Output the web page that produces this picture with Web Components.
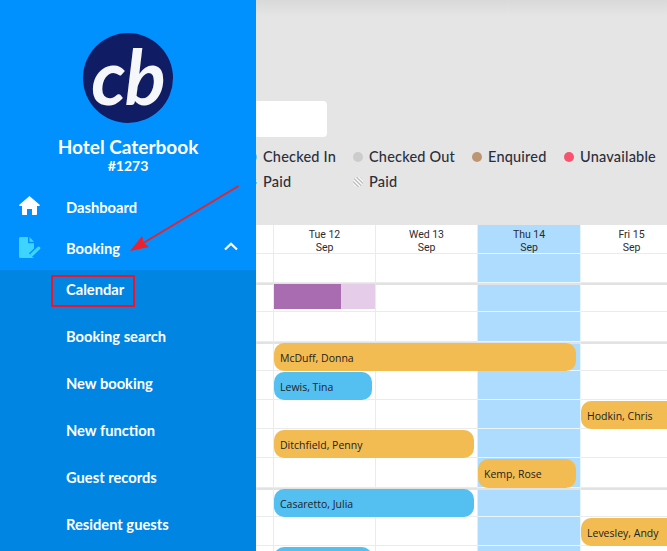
<!DOCTYPE html>
<html>
<head>
<meta charset="utf-8">
<title>Calendar</title>
<style>
  html, body { margin: 0; padding: 0; height: 100%; overflow: hidden; background: #fff; }
  body { display: flex; height: 551px; width: 667px; position: relative; font-family: "Lato", sans-serif; }
</style>
</head>
<body>
<side-bar></side-bar>
<main-area></main-area>
<help-marks></help-marks>

<script>
class NavItem extends HTMLElement {
  connectedCallback() {
    const shadowRoot = this.attachShadow({ mode: "open" });
    shadowRoot.innerHTML = `
    <style>
    :host {
      align-items: center;
      box-sizing: border-box;
      color: #fff;
      display: flex;
      font-size: 14.7px;
      font-weight: 700;
      height: 41px;
      padding-left: 66px;
      position: relative;
    }
    :host([sub]) { height: 47px; }
    .icon {
      display: flex;
      left: 19px;
      position: absolute;
      top: 9px;
    }
    .end {
      display: flex;
      position: absolute;
      right: 18px;
      top: 14px;
    }
    </style>
    <span class="icon"><slot name="icon"></slot></span>
    <slot></slot>
    <span class="end"><slot name="end"></slot></span>
    `;
  }
}

class SideBar extends HTMLElement {
  connectedCallback() {
    const shadowRoot = this.attachShadow({ mode: "open" });
    const subItems = ["Calendar", "Booking search", "New booking", "New function", "Guest records", "Resident guests"];
    shadowRoot.innerHTML = `
    <style>
    :host {
      background: #0091ff;
      display: flex;
      flex: 0 0 256px;
      flex-direction: column;
      height: 551px;
      overflow: hidden;
    }
    .logo {
      align-items: center;
      background: #101c63;
      border-radius: 50%;
      box-sizing: border-box;
      color: #f6f7fb;
      display: flex;
      font-size: 76px;
      font-style: italic;
      font-weight: 700;
      height: 90px;
      justify-content: center;
      letter-spacing: -1px;
      line-height: 1;
      margin: 33px auto 0;
      padding-bottom: 4px;
      width: 90px;
    }
    .name {
      color: #fff;
      font-size: 19px;
      font-weight: 700;
      line-height: 22px;
      margin-top: 13px;
      text-align: center;
    }
    .code {
      color: #fff;
      font-size: 14px;
      font-weight: 700;
      line-height: 17px;
      margin-top: -1px;
      text-align: center;
    }
    nav { margin-top: 13px; padding-bottom: 1px; }
    nav nav-item { padding-bottom: 1px; }
    .sub {
      background: #0085e3;
      flex: 1;
    }
    .sub nav-item:first-child {
      height: 42px;
      padding-bottom: 4px;
    }
    svg { display: block; }
    </style>
    <div class="logo">cb</div>
    <div class="name">Hotel Caterbook</div>
    <div class="code">#1273</div>
    <nav>
      <nav-item>
        <svg slot="icon" width="21" height="19" viewBox="0 0 21 19"><path fill="#fff" d="M10.500 0 .4 8.800c-.5.500-.2 1.200.5 1.200H3v8c0 .6.400 1 1 1h4v-6h5v6h4c.6 0 1-.4 1-1v-8h2.100c.7 0 1-.7.500-1.200z"/></svg>
        Dashboard
      </nav-item>
      <nav-item>
        <svg slot="icon" width="22" height="22" viewBox="0 0 22 22"><path fill="#3dd5ff" d="M0 1.500C0 .7.700 0 1.500 0H9v5.500c0 .4.300.7.700.7H15v13.300c0 .8-.7 1.500-1.500 1.500h-12C.7 21 0 20.300 0 19.500zM10.500 0 15 4.700h-4.500z"/><path fill="none" stroke="#0091ff" stroke-width="6" d="M19.500 11.500 12 18.500"/><path fill="none" stroke="#3dd5ff" stroke-width="3.200" stroke-linecap="round" d="M19.700 11.200 13 17.500"/><path fill="#3dd5ff" d="M11 17.500 13.500 20 10.500 20.800z"/></svg>
        Booking
        <svg slot="end" width="14" height="9" viewBox="0 0 14 9"><path fill="none" stroke="#fff" stroke-width="2.200" d="M1 7.500 7 1.700l6 5.800"/></svg>
      </nav-item>
    </nav>
    <div class="sub">
      ${subItems.map((item) => `<nav-item sub>${item}</nav-item>`).join("")}
    </div>
    `;
  }
}

class LegendKey extends HTMLElement {
  connectedCallback() {
    const shadowRoot = this.attachShadow({ mode: "open" });
    shadowRoot.innerHTML = `
    <style>
    :host {
      align-items: center;
      color: #2b2f3b;
      display: flex;
      font-size: 14.5px;
      font-weight: 500;
      gap: 6px;
      height: 25px;
      letter-spacing: 0.2px;
    }
    .dot {
      background: var(--dot, #ccc);
      border-radius: 50%;
      flex: 0 0 10px;
      height: 10px;
    }
    </style>
    <span class="dot"></span><slot></slot>
    `;
  }
}

class MainArea extends HTMLElement {
  connectedCallback() {
    const shadowRoot = this.attachShadow({ mode: "open" });
    shadowRoot.innerHTML = `
    <style>
    :host {
      display: flex;
      flex: 1;
      flex-direction: column;
      height: 551px;
      min-width: 0;
      overflow: hidden;
    }
    .top {
      background: linear-gradient(#d9d9d9, #e5e5e5 16px);
      box-sizing: border-box;
      flex: 0 0 225px;
      padding-top: 101px;
    }
    .search {
      background: #fff;
      border-radius: 0 4px 4px 0;
      height: 36px;
      width: 71px;
    }
    .legend {
      display: grid;
      grid-template-columns: 106px 119px 92px auto;
      margin-left: -9px;
      margin-top: 7px;
    }
    .striped {
      --dot: repeating-linear-gradient(45deg, #c6c6c6 0 1.600px, #f4f4f4 1.600px 3px);
    }
    </style>
    <div class="top">
      <div class="search"></div>
      <div class="legend">
        <legend-key style="--dot:#53c0f2">Checked In</legend-key>
        <legend-key style="--dot:#cccccc">Checked Out</legend-key>
        <legend-key style="--dot:#bd9572">Enquired</legend-key>
        <legend-key style="--dot:#f9526f">Unavailable</legend-key>
        <legend-key style="--dot:repeating-linear-gradient(45deg,#53c0f2 0 1.6px,#d8eefa 1.6px 3px)">Paid</legend-key>
        <legend-key class="striped">Paid</legend-key>
      </div>
    </div>
    <cal-grid></cal-grid>
    `;
  }
}

class CalGrid extends HTMLElement {
  connectedCallback() {
    const shadowRoot = this.attachShadow({ mode: "open" });
    const days = [["", ""], ["Tue 12", "Sep"], ["Wed 13", "Sep"], ["Thu 14", "Sep"], ["Fri 15", "Sep"]];
    const bars = [
      { row: 4, col: 2, span: 3, name: "McDuff, Donna", color: "amber", short: true },
      { row: 5, col: 2, span: 1, name: "Lewis, Tina", color: "sky" },
      { row: 6, col: 5, span: 1, name: "Hodkin, Chris", color: "amber", open: true },
      { row: 7, col: 2, span: 2, name: "Ditchfield, Penny", color: "amber" },
      { row: 8, col: 4, span: 1, name: "Kemp, Rose", color: "amber", short: true },
      { row: 9, col: 2, span: 2, name: "Casaretto, Julia", color: "sky" },
      { row: 10, col: 5, span: 1, name: "Levesley, Andy", color: "amber", open: true },
      { row: 11, col: 2, span: 1, name: "", color: "sky" },
    ];
    const heavyRows = [2, 4, 9];

    let cells = days.map((day, i) => `
      <div class="head ${i === 3 ? "today" : ""}" style="grid-row:1;grid-column:${i + 1}">
        <span>${day[0]}</span><span>${day[1]}</span>
      </div>`).join("");
    for (let row = 1; row <= 11; row++) {
      for (let col = 1; col <= 5; col++) {
        const classes = ["cell"];
        if (col === 4) classes.push("today");
        if (heavyRows.includes(row)) classes.push("heavy");
        cells += `<div class="${classes.join(" ")}" style="grid-row:${row + 1};grid-column:${col}"></div>`;
      }
    }

    shadowRoot.innerHTML = `
    <style>
    :host {
      background: #fff;
      color: #2c2c2c;
      display: grid;
      flex: 1;
      font-family: "Open Sans", sans-serif;
      font-size: 10px;
      grid-template-columns: 18px 102px 102px 103px 102px;
      grid-template-rows: 29px repeat(11, 29.2px);
      overflow: hidden;
      width: 411px;
    }
    .head {
      align-items: center;
      border-bottom: 1px solid #ebebeb;
      border-right: 1px solid #ebebeb;
      box-sizing: border-box;
      display: flex;
      flex-direction: column;
      font-family: "Roboto", sans-serif;
      font-size: 10.5px;
      justify-content: center;
      line-height: 13px;
      padding-top: 4px;
    }
    .cell {
      border-bottom: 1px solid #ebebeb;
      border-right: 1px solid #ebebeb;
      box-sizing: border-box;
    }
    .heavy { border-top: 2px solid #e2e2e2; }
    .today { background: #addcff; border-color: #e9f5ff; }
    .today.heavy { border-top-color: #e2e2e2; }
    .bar {
      align-items: center;
      border-radius: 10px;
      box-sizing: border-box;
      color: #222;
      display: flex;
      font-size: 10.5px;
      margin: 1px 4px 0 0;
      padding: 2px 0 0 6px;
      white-space: nowrap;
      z-index: 1;
    }
    .bar--amber { background: #f2bc52; }
    .bar--sky { background: #54c0f2; }
    .bar--short { margin-right: 5px; }
    .bar--open { margin-right: -12px; }
    .block {
      display: flex;
      grid-column: 2;
      grid-row: 3;
      height: 25px;
      margin-top: 1px;
      z-index: 1;
    }
    .block__paid { background: #aa6cb0; flex: 0 0 67px; }
    .block__rest { background: #e5cde9; flex: 1; margin-right: 1px; }
    </style>
    ${cells}
    <div class="block"><div class="block__paid"></div><div class="block__rest"></div></div>
    ${bars.map((bar) => `
      <div class="bar bar--${bar.color} ${bar.open ? "bar--open" : ""} ${bar.short ? "bar--short" : ""}"
        style="grid-row:${bar.row + 1};grid-column:${bar.col} / span ${bar.span}">${bar.name}</div>`).join("")}
    `;
  }
}

class HelpMarks extends HTMLElement {
  connectedCallback() {
    const shadowRoot = this.attachShadow({ mode: "open" });
    shadowRoot.innerHTML = `
    <style>
    :host {
      inset: 0;
      pointer-events: none;
      position: absolute;
    }
    svg { display: block; }
    </style>
    <svg width="667" height="551" viewBox="0 0 667 551">
      <rect x="52" y="276" width="82" height="30" fill="none" stroke="#f0142b" stroke-width="2"/>
      <path d="M238.500 186 140 245" stroke="#e8222e" stroke-width="2" fill="none"/>
      <path d="M130 251 142 236 144 243 149 247z" fill="#e8222e"/>
    </svg>
    `;
  }
}

customElements.define("nav-item", NavItem);
customElements.define("side-bar", SideBar);
customElements.define("legend-key", LegendKey);
customElements.define("main-area", MainArea);
customElements.define("cal-grid", CalGrid);
customElements.define("help-marks", HelpMarks);
</script>
</body>
</html>
